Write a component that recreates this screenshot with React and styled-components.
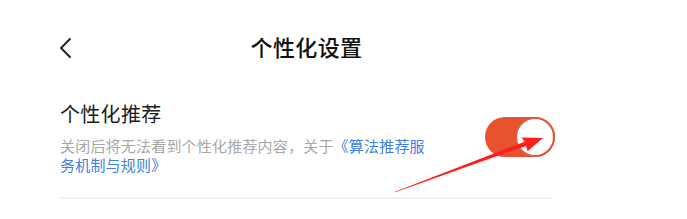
import React, { useState } from 'react';
import styled, { createGlobalStyle } from 'styled-components';

const GlobalStyle = createGlobalStyle`
  html, body {
    margin: 0;
    padding: 0;
    background: #ffffff;
    font-family: "Noto Sans CJK SC", "Noto Sans", sans-serif;
  }
`

const Page = styled.div`
  position: relative;
  width: 687px;
  height: 219px;
  overflow: hidden;
  background: #fff;
`

const Content = styled.div`
  width: 493px;
  margin-left: 60px;
`

const Header = styled.div`
  position: relative;
  height: 92px;
  display: flex;
  align-items: center;
  justify-content: center;
`

const BackButton = styled.button`
  position: absolute;
  left: -4px;
  top: 36px;
  width: 20px;
  height: 24px;
  padding: 0;
  border: none;
  background: none;
  display: flex;
  align-items: center;
  justify-content: center;
`

const Title = styled.h1`
  margin: 0;
  font-size: 22px;
  font-weight: 500;
  color: #111;
  letter-spacing: 0.4px;
`

const Row = styled.div`
  display: flex;
  align-items: center;
  justify-content: space-between;
  padding: 8px 0 23px;
  border-bottom: 2px solid #f3f3f3;
`

const TextBlock = styled.div`
  display: flex;
  flex-direction: column;
`

const ItemTitle = styled.div`
  font-size: 20px;
  line-height: 28px;
  color: #1c1c1c;
  letter-spacing: 0.3px;
`

const Desc = styled.p`
  margin: 8px 0 0;
  max-width: 372px;
  font-size: 15px;
  line-height: 19px;
  color: #a8a8a8;
  letter-spacing: 0.2px;
`

const Link = styled.a`
  color: #3f80de;
  text-decoration: none;
`

const Track = styled.button`
  position: relative;
  width: 70px;
  height: 40px;
  padding: 0;
  margin-right: -2px;
  border: none;
  border-radius: 20px;
  background: ${p => (p.$on ? '#e8532f' : '#ddd')};
  display: flex;
  justify-content: ${p => (p.$on ? 'flex-end' : 'flex-start')};
`

const Thumb = styled.span`
  box-sizing: border-box;
  width: 40px;
  height: 40px;
  border-radius: 50%;
  background: #fff;
  border: 2px solid ${p => (p.$on ? '#e0593a' : '#ddd')};
`

// red annotation arrow drawn over the screenshot
const Annotation = styled.svg`
  position: absolute;
  left: 0;
  top: 0;
  pointer-events: none;
`

const App = () => {
  const [on, setOn] = useState(true);

  return (
    <>
      <GlobalStyle />
      <Page>
        <Content>
          <Header>
            <BackButton aria-label="back">
              <svg width="16" height="22" viewBox="0 0 16 22">
                <path d="M12 2 L3 11 L12 20" fill="none" stroke="#222" strokeWidth="2" strokeLinecap="round" strokeLinejoin="round" />
              </svg>
            </BackButton>
            <Title>个性化设置</Title>
          </Header>
          <Row>
            <TextBlock>
              <ItemTitle>个性化推荐</ItemTitle>
              <Desc>
                关闭后将无法看到个性化推荐内容，关于<Link href="#">《算法推荐服务机制与规则》</Link>
              </Desc>
            </TextBlock>
            <Track $on={on} onClick={() => setOn(!on)}>
              <Thumb $on={on} />
            </Track>
          </Row>
        </Content>
        <Annotation width="687" height="219" viewBox="0 0 687 219">
          <polygon
            points="395.1,192.3 526.0,145.9 527.6,151.2 543,138 521.6,137.5 524.6,141.7 394.9,191.7"
            fill="#ff1e1e"
          />
        </Annotation>
      </Page>
    </>
  );
};

export default App;
